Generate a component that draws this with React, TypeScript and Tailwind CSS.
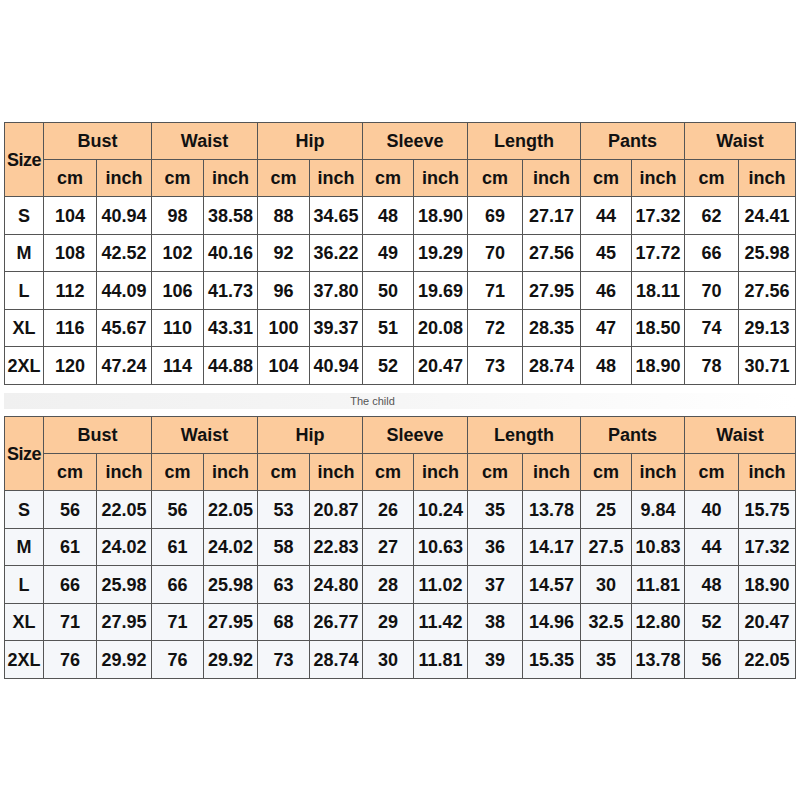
const groups = ["Bust", "Waist", "Hip", "Sleeve", "Length", "Pants", "Waist"];
const widths = [39, 53, 55, 52, 54, 52, 53, 51, 54, 55, 58, 51, 53, 54, 57];
const rowHeights = [38, 37, 38, 37, 38];

const adult: [string, ...string[]][] = [
  ["S", "104", "40.94", "98", "38.58", "88", "34.65", "48", "18.90", "69", "27.17", "44", "17.32", "62", "24.41"],
  ["M", "108", "42.52", "102", "40.16", "92", "36.22", "49", "19.29", "70", "27.56", "45", "17.72", "66", "25.98"],
  ["L", "112", "44.09", "106", "41.73", "96", "37.80", "50", "19.69", "71", "27.95", "46", "18.11", "70", "27.56"],
  ["XL", "116", "45.67", "110", "43.31", "100", "39.37", "51", "20.08", "72", "28.35", "47", "18.50", "74", "29.13"],
  ["2XL", "120", "47.24", "114", "44.88", "104", "40.94", "52", "20.47", "73", "28.74", "48", "18.90", "78", "30.71"],
];

const child: [string, ...string[]][] = [
  ["S", "56", "22.05", "56", "22.05", "53", "20.87", "26", "10.24", "35", "13.78", "25", "9.84", "40", "15.75"],
  ["M", "61", "24.02", "61", "24.02", "58", "22.83", "27", "10.63", "36", "14.17", "27.5", "10.83", "44", "17.32"],
  ["L", "66", "25.98", "66", "25.98", "63", "24.80", "28", "11.02", "37", "14.57", "30", "11.81", "48", "18.90"],
  ["XL", "71", "27.95", "71", "27.95", "68", "26.77", "29", "11.42", "38", "14.96", "32.5", "12.80", "52", "20.47"],
  ["2XL", "76", "29.92", "76", "29.92", "73", "28.74", "30", "11.81", "39", "15.35", "35", "13.78", "56", "22.05"],
];

function SizeTable({ rows, rowBg }: { rows: string[][]; rowBg: string }) {
  const cell = "border border-[#555] text-center p-0 leading-none";
  return (
    <table className="ml-[4px] border-collapse table-fixed w-[791px] text-[18px] font-bold text-[#111]">
      <colgroup>
        {widths.map((w, i) => (
          <col key={i} style={{ width: w }} />
        ))}
      </colgroup>
      <thead className="bg-[#fccb9c]">
        <tr className="h-[37px]">
          <th rowSpan={2} className={`${cell} tracking-[-0.5px]`}>
            Size
          </th>
          {groups.map((g, i) => (
            <th key={i} colSpan={2} className={cell}>
              {g}
            </th>
          ))}
        </tr>
        <tr className="h-[37px]">
          {groups.map((_, i) => [
            <th key={`c${i}`} className={cell}>cm</th>,
            <th key={`i${i}`} className={cell}>inch</th>,
          ])}
        </tr>
      </thead>
      <tbody className={rowBg}>
        {rows.map((r, ri) => (
          <tr key={ri} style={{ height: rowHeights[ri] }}>
            {r.map((v, ci) => (
              <td key={ci} className={cell}>
                {v}
              </td>
            ))}
          </tr>
        ))}
      </tbody>
    </table>
  );
}

export default function App() {
  return (
    <div className="w-[800px] h-[800px] bg-white pt-[122px] font-['Liberation_Sans',Arial,sans-serif]">
      <SizeTable rows={adult} rowBg="bg-white" />
      <div className="mt-[8px] mb-[7px] ml-[4px] h-[16px] w-[791px] bg-gradient-to-r from-[#f0f0f0] via-[#f6f6f6] to-white flex items-center justify-center">
        <span className="text-[11px] font-normal text-[#555] ml-[-54px]">The child</span>
      </div>
      <SizeTable rows={child} rowBg="bg-[#f5f7fa]" />
    </div>
  );
}
